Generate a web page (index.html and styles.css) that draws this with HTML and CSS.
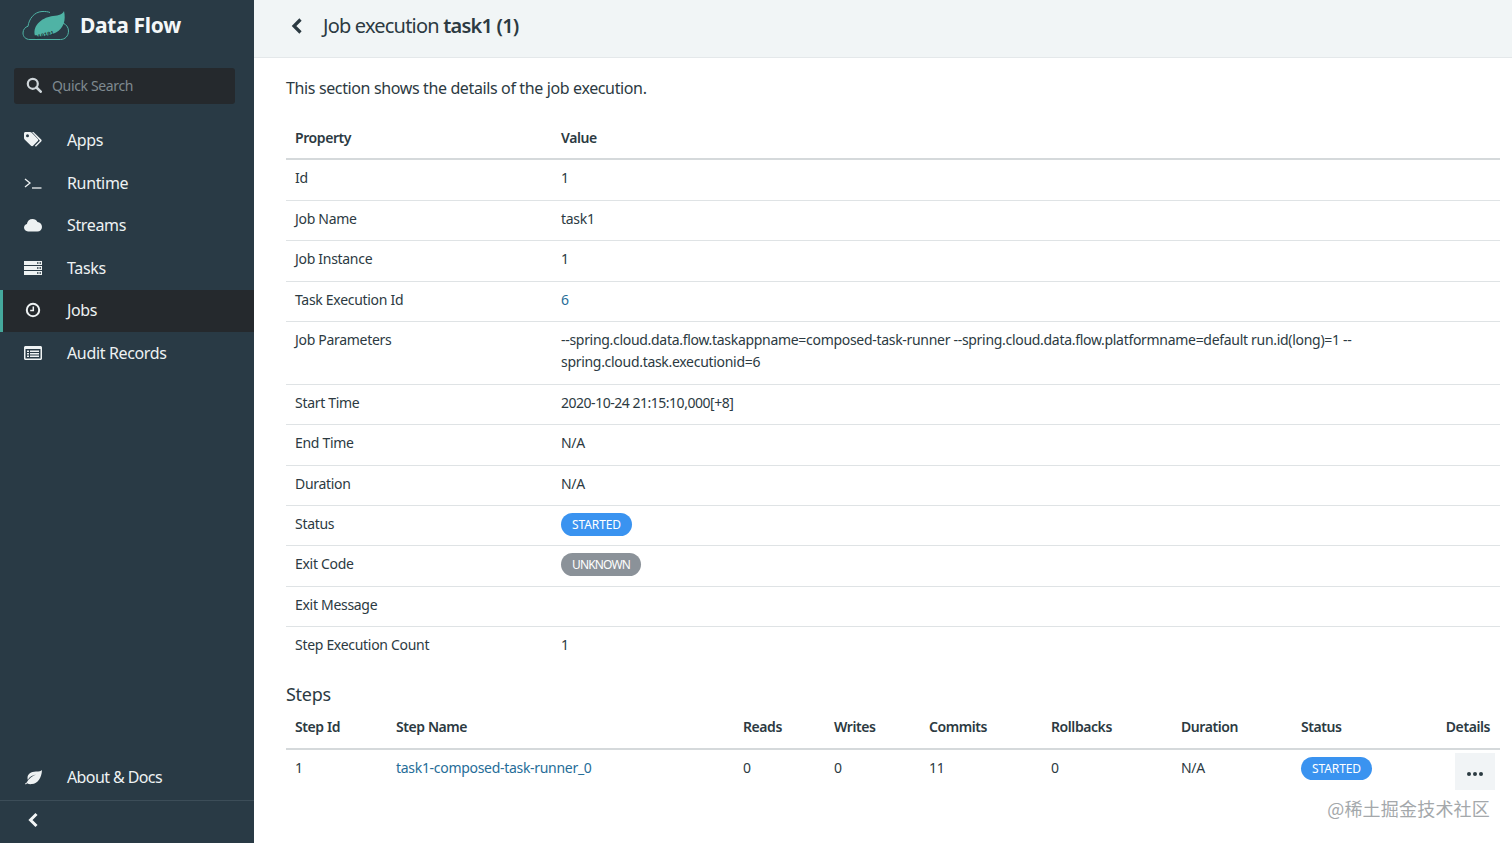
FILE: index.html
```html
<!DOCTYPE html>
<html lang="en">
<head>
<meta charset="utf-8">
<title>Job execution task1 (1)</title>
<link rel="stylesheet" href="styles.css">
</head>
<body>
<div class="app">
  <aside class="sidebar">
    <div class="brand">
      <svg class="logo" width="48" height="34" viewBox="0 0 48 34">
        <path d="M8 31.500C3.500 31.500 1 28.500 1 25c0-3.500 2.200-6 5-6.700C7 11 12 4 20 3.500c3-.2 6 .2 8 1" fill="none" stroke="#4fb3a5" stroke-width="1"/>
        <path d="M41 15c3 1.500 5.500 4 5.500 8 0 5-3.500 8.500-8 8.500H8" fill="none" stroke="#4fb3a5" stroke-width="1"/>
        <path d="M13 28C10 16 22 9 31 8c6-.5 10-2 11-5 2 9 0 17-8 21.500-7 3.500-15 4.500-21 3.500z" fill="#4fb3a5"/>
        <text x="13" y="31" class="logo-bits" transform="rotate(-14 13 31)">010101</text>
      </svg>
      <span class="brand-name">Data Flow</span>
    </div>
    <div class="search">
      <svg width="16" height="16" viewBox="0 0 16 16"><circle cx="6.800" cy="6.800" r="5" fill="none" stroke="#cfd6da" stroke-width="2.200"/><path d="M10.500 10.500l4.200 4.200" stroke="#cfd6da" stroke-width="2.600" stroke-linecap="round"/></svg>
      <span>Quick Search</span>
    </div>
    <nav class="nav">
      <a class="nav-item">
        <svg class="nav-icon" width="18" height="16" viewBox="0 0 18 16"><path fill-rule="evenodd" d="M0 1.500C0 .6.600 0 1.500 0H6c.6 0 1.100.2 1.500.6l6.300 6.300c.6.600.6 1.500 0 2.100l-4.700 4.700c-.6.600-1.500.6-2.100 0L.6 7.500C.2 7.100 0 6.600 0 6zM3.500 2.200a1.500 1.500 0 1 0 0 3 1.500 1.500 0 0 0 0-3z" fill="#eef2f3"/><path d="M9.500 0l7.700 7.400c.6.600.6 1.500 0 2.100l-5.300 5.300-1-1 5-5L8 0z" fill="#eef2f3"/></svg>
        <span>Apps</span>
      </a>
      <a class="nav-item">
        <svg class="nav-icon" width="18" height="16" viewBox="0 0 18 16"><path d="M1 4l5 4-5 4" fill="none" stroke="#eef2f3" stroke-width="1.300"/><path d="M8 13h9.500" stroke="#eef2f3" stroke-width="1.300"/></svg>
        <span>Runtime</span>
      </a>
      <a class="nav-item">
        <svg class="nav-icon" width="18" height="16" viewBox="0 0 18 16"><path d="M4 14.500C1.800 14.500 0 12.800 0 10.600 0 8.800 1.200 7.300 2.900 6.900 3.300 4 5.700 2 8.500 2c2.200 0 4.100 1.200 5 3.100 2.500.2 4.500 2.300 4.500 4.800 0 2.600-2 4.600-4.600 4.600z" fill="#eef2f3"/></svg>
        <span>Streams</span>
      </a>
      <a class="nav-item">
        <svg class="nav-icon" width="18" height="16" viewBox="0 0 18 16"><path fill-rule="evenodd" d="M0 1h18v4H0zM13 2.300v1.400h1.500V2.300zM15.500 2.300v1.400H17V2.300zM0 6h18v4H0zM13 7.300v1.400h1.500V7.300zM15.500 7.300v1.400H17V7.300zM0 11h18v4H0zM13 12.300v1.400h1.500v-1.400zM15.500 12.300v1.400H17v-1.400z" fill="#eef2f3"/></svg>
        <span>Tasks</span>
      </a>
      <a class="nav-item active">
        <svg class="nav-icon" width="18" height="16" viewBox="0 0 18 16"><circle cx="9" cy="8" r="6.200" fill="none" stroke="#eef2f3" stroke-width="2"/><path d="M9.300 4.500v4H6.200" fill="none" stroke="#eef2f3" stroke-width="1.500"/></svg>
        <span>Jobs</span>
      </a>
      <a class="nav-item">
        <svg class="nav-icon" width="18" height="16" viewBox="0 0 18 16"><path fill-rule="evenodd" d="M1.500 1h15c.8 0 1.500.7 1.500 1.500v11c0 .8-.7 1.500-1.500 1.500h-15C.7 15 0 14.300 0 13.500v-11C0 1.700.7 1 1.500 1zM1.500 4v9.500h15V4zM3 5.500h2v1.400H3zM6 5.500h9v1.400H6zM3 8h2v1.400H3zM6 8h9v1.400H6zM3 10.500h2v1.400H3zM6 10.500h9v1.400H6z" fill="#eef2f3"/></svg>
        <span>Audit Records</span>
      </a>
    </nav>
    <div class="sidebar-bottom">
      <a class="nav-item about">
        <svg class="nav-icon" width="18" height="16" viewBox="0 0 18 16"><path d="M18 1c-1 1-3 1.500-6 1.600C7 2.800 3.500 5 3.500 9c0 .6.100 1.200.3 1.700C5.500 8 8.500 6.300 12 5.600 8.500 7 4.800 9.500 2.500 13.800L1 14.500l.8 1 1.300-1.300c1.200.8 2.900 1.100 4.700.9C14 14.500 17.500 9 18 1z" fill="#eef2f3"/></svg>
        <span>About &amp; Docs</span>
      </a>
      <button class="collapse" aria-label="Collapse">
        <svg width="12" height="16" viewBox="0 0 12 16"><path d="M9.500 2L3.500 8l6 6" fill="none" stroke="#f2f5f6" stroke-width="3"/></svg>
      </button>
    </div>
  </aside>
  <main class="main">
    <header class="page-header">
      <svg class="back" width="14" height="18" viewBox="0 0 14 18"><path d="M10.500 2.500L4 9l6.500 6.500" fill="none" stroke="#2c3a42" stroke-width="3.200"/></svg>
      <h1>Job execution <strong>task1 (1)</strong></h1>
    </header>
    <section class="content">
      <p class="intro">This section shows the details of the job execution.</p>
      <table class="table props">
        <colgroup><col class="c-prop"><col></colgroup>
        <thead><tr><th>Property</th><th>Value</th></tr></thead>
        <tbody>
          <tr><td>Id</td><td>1</td></tr>
          <tr><td>Job Name</td><td>task1</td></tr>
          <tr><td>Job Instance</td><td>1</td></tr>
          <tr><td>Task Execution Id</td><td><a class="link">6</a></td></tr>
          <tr><td>Job Parameters</td><td>--spring.cloud.data.flow.taskappname=composed-task-runner --spring.cloud.data.flow.platformname=default run.id(long)=1 --<br>spring.cloud.task.executionid=6</td></tr>
          <tr><td>Start Time</td><td class="date">2020-10-24 21:15:10,000[+8]</td></tr>
          <tr><td>End Time</td><td>N/A</td></tr>
          <tr><td>Duration</td><td>N/A</td></tr>
          <tr><td>Status</td><td><span class="pill blue">STARTED</span></td></tr>
          <tr><td>Exit Code</td><td><span class="pill gray">UNKNOWN</span></td></tr>
          <tr><td>Exit Message</td><td></td></tr>
          <tr class="last"><td>Step Execution Count</td><td>1</td></tr>
        </tbody>
      </table>
      <h2>Steps</h2>
      <table class="table steps">
        <colgroup>
          <col class="s1"><col class="s2"><col class="s3"><col class="s4"><col class="s5"><col class="s6"><col class="s7"><col class="s8"><col>
        </colgroup>
        <thead>
          <tr><th>Step Id</th><th>Step Name</th><th>Reads</th><th>Writes</th><th>Commits</th><th>Rollbacks</th><th>Duration</th><th>Status</th><th class="right">Details</th></tr>
        </thead>
        <tbody>
          <tr class="last"><td>1</td><td><a class="link">task1-composed-task-runner_0</a></td><td>0</td><td>0</td><td>11</td><td>0</td><td>N/A</td><td><span class="pill blue">STARTED</span></td><td class="right"><button class="more" aria-label="Details"><i></i><i></i><i></i></button></td></tr>
        </tbody>
      </table>
    </section>
    <div class="watermark">@稀土掘金技术社区</div>
  </main>
</div>
</body>
</html>
```
FILE: styles.css
```css
* { box-sizing: border-box; }
html, body { margin: 0; height: 100%; overflow: hidden; }
body { font-family: "Noto Sans", "Liberation Sans", sans-serif; font-size: 14px; color: #2c3a42; background: #fff; }
.app { display: flex; height: 843px; }

.sidebar { width: 254px; flex: none; background: #293a45; color: #eef2f3; display: flex; flex-direction: column; }
.brand { height: 68px; padding: 8px 0 0 22px; display: flex; align-items: flex-start; gap: 10px; }
.logo { flex: none; }
.logo-bits { font-family: "Liberation Mono", monospace; font-size: 5.500px; fill: #1f2d35; font-weight: 700; }
.brand-name { font-size: 21px; font-weight: 700; line-height: 34px; color: #f4f7f8; letter-spacing: -.3px; }
.search { margin: 0 19px 0 14px; height: 36px; padding: 0 0 2px 12px; background: #25292d; border-radius: 3px; display: flex; align-items: center; gap: 10px; font-size: 14px; color: #7f8a90; letter-spacing: -.35px; }
.nav { margin-top: 15.500px; display: flex; flex-direction: column; }
.nav-item { height: 42.5px; display: flex; align-items: center; padding-left: 24px; padding-bottom: 1px; font-size: 16px; color: #eef2f3; letter-spacing: -.35px; }
.nav-item.active { background: #25292d; box-shadow: inset 3px 0 0 #45a89c; }
.nav-icon { flex: none; margin-right: 25px; }
.sidebar-bottom { margin-top: auto; }
.nav-item.about { height: 46px; letter-spacing: -.6px; }
.collapse { width: 100%; height: 43px; padding: 0 0 4px 27px; display: flex; align-items: center; background: none; border: 0; border-top: 1px solid #3c4d58; }

.main { flex: 1; min-width: 0; position: relative; }
.page-header { height: 58px; background: #f1f5f6; border-bottom: 1px solid #e4e8ea; display: flex; align-items: center; padding-left: 36px; padding-bottom: 5px; }
.back { margin-right: 19px; flex: none; }
h1 { margin: 0 0 1px; font-size: 20px; font-weight: 400; letter-spacing: -.8px; }
h1 strong { font-weight: 600; }
.content { padding: 18px 12px 0 32px; }
.intro { margin: 0 0 17.500px; font-size: 16px; line-height: 24px; letter-spacing: -.37px; }
.table { width: 100%; border-collapse: collapse; table-layout: fixed; font-size: 14px; line-height: 22.4px; letter-spacing: -.3px; }
.table th { text-align: left; font-weight: 600; padding: 9px 9px 9.500px; border-bottom: 2px solid #d5d9db; letter-spacing: -.42px; }
.table td { padding: 7px 9px 10px; border-bottom: 1px solid #dfe3e5; vertical-align: top; }
.table .last td { border-bottom: 0; }
.table .right { text-align: right; }
.table .date { letter-spacing: -.48px; }
.c-prop { width: 266px; }
.link { color: #266d98; }
.pill { display: inline-block; height: 23px; line-height: 23px; margin-bottom: -1px; border-radius: 12px; padding: 0 11px; font-size: 12px; color: #fff; vertical-align: top; letter-spacing: -.1px; }
.pill.blue { background: #3a93f0; }
.pill.gray { background: #8b9299; letter-spacing: -.85px; }
h2 { margin: 14px 0 0; font-size: 18px; font-weight: 400; line-height: 27px; letter-spacing: -.3px; }
.table.steps th { padding-top: 8px; }
.table.steps td { padding-top: 7px; }
.s1 { width: 101px; } .s2 { width: 347px; } .s3 { width: 91px; } .s4 { width: 95px; } .s5 { width: 122px; } .s6 { width: 130px; } .s7 { width: 120px; } .s8 { width: 118px; }
.table.steps th.right { padding-right: 10px; }
.more { width: 40px; height: 37px; margin: -4px -4px -20px 0; background: #f1f4f6; border: 0; display: inline-flex; align-items: center; justify-content: center; gap: 1.500px; padding: 6px 0 0; vertical-align: top; }
.more i { width: 4.500px; height: 4.500px; border-radius: 50%; background: #2c3a42; }
.watermark { position: absolute; right: 22px; top: 795px; font-family: "Noto Sans CJK SC", sans-serif; font-size: 18px; line-height: 26px; letter-spacing: .2px; color: #a4a8ab; }
```
